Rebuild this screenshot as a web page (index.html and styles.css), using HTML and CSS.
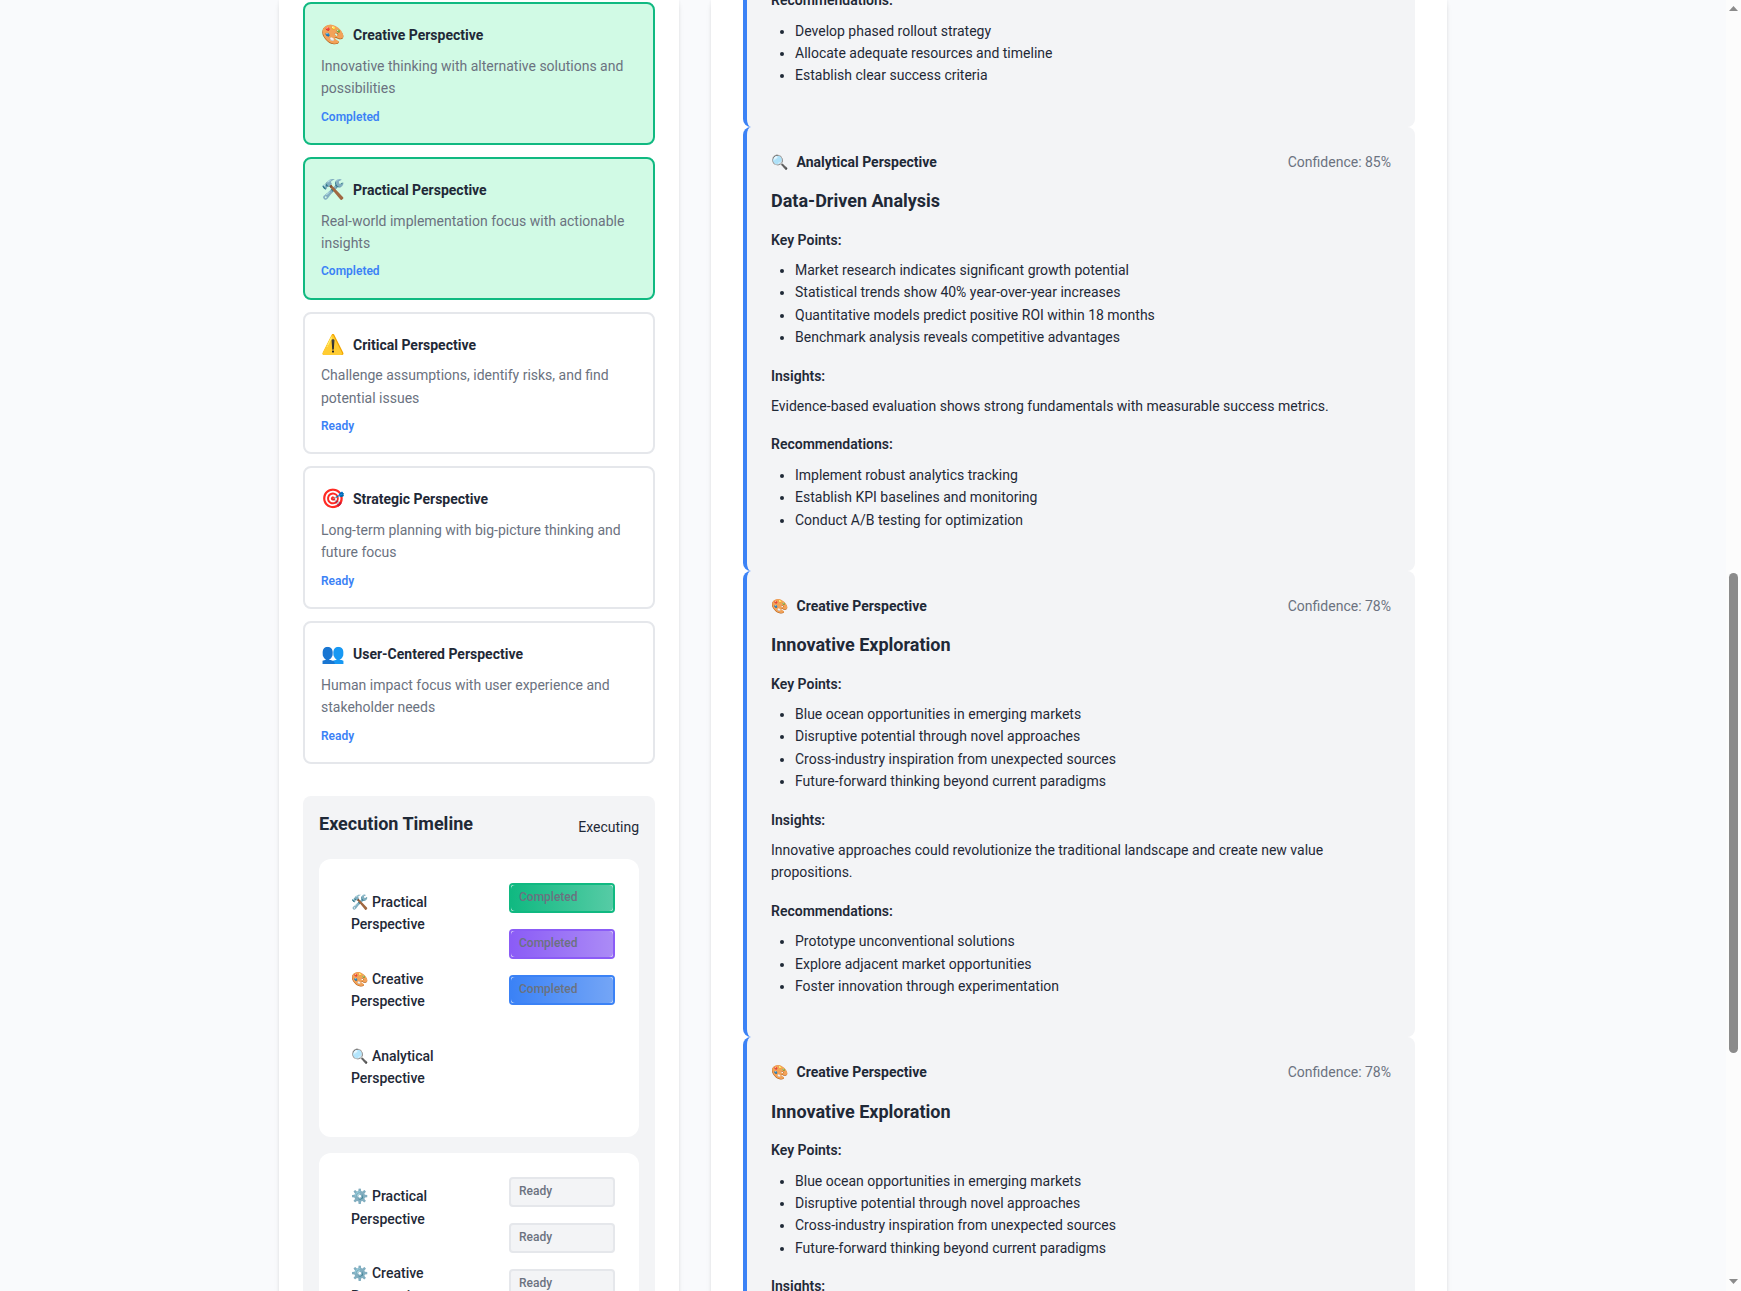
FILE: index.html
```html
<!DOCTYPE html>
<html lang="en">
<head>
<meta charset="utf-8">
<title>Perspectives</title>
<link rel="stylesheet" href="styles.css">
</head>
<body>
<div class="viewport">
<main class="page">
  <aside class="panel sidebar">
    <section class="cards">
      <article class="card done">
        <div class="card-head"><span class="card-icon">🎨</span><span class="name">Creative Perspective</span></div>
        <p class="desc">Innovative thinking with alternative solutions and possibilities</p>
        <div class="status">Completed</div>
      </article>
      <article class="card done">
        <div class="card-head"><span class="card-icon">🛠️</span><span class="name">Practical Perspective</span></div>
        <p class="desc">Real-world implementation focus with actionable insights</p>
        <div class="status">Completed</div>
      </article>
      <article class="card">
        <div class="card-head"><span class="card-icon">⚠️</span><span class="name">Critical Perspective</span></div>
        <p class="desc">Challenge assumptions, identify risks, and find potential issues</p>
        <div class="status">Ready</div>
      </article>
      <article class="card">
        <div class="card-head"><span class="card-icon">🎯</span><span class="name">Strategic Perspective</span></div>
        <p class="desc">Long-term planning with big-picture thinking and future focus</p>
        <div class="status">Ready</div>
      </article>
      <article class="card">
        <div class="card-head"><span class="card-icon">👥</span><span class="name">User-Centered Perspective</span></div>
        <p class="desc">Human impact focus with user experience and stakeholder needs</p>
        <div class="status">Ready</div>
      </article>
    </section>
    <section class="timeline">
      <header class="timeline-head"><h3>Execution Timeline</h3><span>Executing</span></header>
      <div class="track">
        <div class="labels">
          <div class="label">🛠️ Practical Perspective</div>
          <div class="label">🎨 Creative Perspective</div>
          <div class="label">🔍 Analytical Perspective</div>
        </div>
        <div class="bars">
          <div class="bar green"><span>Completed</span></div>
          <div class="bar purple"><span>Completed</span></div>
          <div class="bar blue"><span>Completed</span></div>
        </div>
      </div>
      <div class="track">
        <div class="labels">
          <div class="label">⚙️ Practical Perspective</div>
          <div class="label">⚙️ Creative Perspective</div>
          <div class="label">⚙️ Analytical Perspective</div>
        </div>
        <div class="bars">
          <div class="bar"><span>Ready</span></div>
          <div class="bar"><span>Ready</span></div>
          <div class="bar"><span>Ready</span></div>
        </div>
      </div>
    </section>
  </aside>
  <section class="panel results">
    <article class="result continued">
      <h4>Recommendations:</h4>
      <ul>
        <li>Develop phased rollout strategy</li>
        <li>Allocate adequate resources and timeline</li>
        <li>Establish clear success criteria</li>
      </ul>
    </article>
    <article class="result">
      <header class="result-head"><span class="who"><span>🔍</span><span class="name">Analytical Perspective</span></span><span class="confidence">Confidence: 85%</span></header>
      <h3>Data-Driven Analysis</h3>
      <h4>Key Points:</h4>
      <ul>
        <li>Market research indicates significant growth potential</li>
        <li>Statistical trends show 40% year-over-year increases</li>
        <li>Quantitative models predict positive ROI within 18 months</li>
        <li>Benchmark analysis reveals competitive advantages</li>
      </ul>
      <h4>Insights:</h4>
      <p>Evidence-based evaluation shows strong fundamentals with measurable success metrics.</p>
      <h4>Recommendations:</h4>
      <ul>
        <li>Implement robust analytics tracking</li>
        <li>Establish KPI baselines and monitoring</li>
        <li>Conduct A/B testing for optimization</li>
      </ul>
    </article>
    <article class="result">
      <header class="result-head"><span class="who"><span>🎨</span><span class="name">Creative Perspective</span></span><span class="confidence">Confidence: 78%</span></header>
      <h3>Innovative Exploration</h3>
      <h4>Key Points:</h4>
      <ul>
        <li>Blue ocean opportunities in emerging markets</li>
        <li>Disruptive potential through novel approaches</li>
        <li>Cross-industry inspiration from unexpected sources</li>
        <li>Future-forward thinking beyond current paradigms</li>
      </ul>
      <h4>Insights:</h4>
      <p>Innovative approaches could revolutionize the traditional landscape and create new value propositions.</p>
      <h4>Recommendations:</h4>
      <ul>
        <li>Prototype unconventional solutions</li>
        <li>Explore adjacent market opportunities</li>
        <li>Foster innovation through experimentation</li>
      </ul>
    </article>
    <article class="result">
      <header class="result-head"><span class="who"><span>🎨</span><span class="name">Creative Perspective</span></span><span class="confidence">Confidence: 78%</span></header>
      <h3>Innovative Exploration</h3>
      <h4>Key Points:</h4>
      <ul>
        <li>Blue ocean opportunities in emerging markets</li>
        <li>Disruptive potential through novel approaches</li>
        <li>Cross-industry inspiration from unexpected sources</li>
        <li>Future-forward thinking beyond current paradigms</li>
      </ul>
      <h4>Insights:</h4>
    </article>
  </section>
</main>
<div class="scrollbar">
  <svg width="9" height="5" viewBox="0 0 9 5"><path d="M4.5 0L9 5H0Z"/></svg>
  <div class="thumb"></div>
  <svg class="down" width="9" height="5" viewBox="0 0 9 5"><path d="M0 0H9L4.5 5Z"/></svg>
</div>
</div>
</body>
</html>
```
FILE: styles.css
```css
* { box-sizing: border-box; margin: 0; padding: 0; }

body {
  background: #f9fafc;
  color: #1f2937;
  font-family: Roboto, "Liberation Sans", sans-serif;
  font-size: 14px;
  line-height: 1.6;
  overflow: hidden;
}

.viewport { display: flex; height: 1291px; overflow: hidden; }

.page {
  flex: 1;
  max-width: 1200px;
  margin: 0 auto;
  padding: 0 16px;
  display: grid;
  grid-template-columns: 400px 1fr;
  gap: 32px;
}

.panel { background: #fff; box-shadow: 0 4px 6px -1px rgba(0, 0, 0, .1), 0 0 3px rgba(0, 0, 0, .06); height: 1600px; }

.sidebar { padding: 2.25px 24px 0; }
.cards { display: flex; flex-direction: column; gap: 12px; }
.card { border: 2px solid #e5e7eb; border-radius: 8px; padding: 16px; }
.card.done { background: #d1fae5; border-color: #10b981; }
.card-head { display: flex; align-items: center; gap: 8px; margin-bottom: 4px; }
.card-icon { font-size: 19.2px; }
.name { font-weight: 700; }
.desc { color: #6b7280; margin-bottom: 8px; }
.status { color: #3b82f6; font-size: 12px; font-weight: 600; }

h3 { font-size: 18px; font-weight: 700; line-height: 1.3; }
h4 { font-size: 14px; font-weight: 600; margin-bottom: 8px; }

.timeline { margin-top: 32px; padding: 16px; background: #f3f4f6; border-radius: 8px; height: 800px; }
.timeline-head { display: flex; justify-content: space-between; align-items: center; margin-bottom: 16px; }
.timeline-head h3 { margin-bottom: 8px; }
.track { display: grid; grid-template-columns: 150px 1fr; gap: 16px; padding: 24px; margin-bottom: 16px; background: #fff; border-radius: 12px; }
.label { padding: 8px; margin-bottom: 16px; font-weight: 500; word-spacing: .5px; }
.bars { display: flex; flex-direction: column; gap: 16px; }
.bar { height: 30px; border: 2px solid #e5e7eb; border-radius: 4px; background: #f3f4f6; color: #6b7280; font-size: 12px; font-weight: 500; }
.bar span { display: block; height: 26px; padding: 3px 8px; border-radius: 4px; }
.green { border-color: #10b981; }
.green span { background: linear-gradient(90deg, #10b981, #10b981b0); }
.purple { border-color: #8b5cf6; }
.purple span { background: linear-gradient(90deg, #8b5cf6, #8b5cf6b0); }
.blue { border-color: #3b82f6; }
.blue span { background: linear-gradient(90deg, #3b82f6, #3b82f6b0); }

.results { padding: 0 32px; }
.result { background: #f3f4f6; border-left: 4px solid #3b82f6; border-radius: 8px; padding: 24px; }
.result.continued { margin-top: -10.75px; padding-top: 0; }
.result-head { display: flex; justify-content: space-between; margin-bottom: 16px; }
.who { display: flex; gap: 8.5px; }
.confidence { color: #6b7280; }
.result h3, .result ul, .result p { margin-bottom: 16px; }
.result ul { padding-left: 24px; }

.scrollbar {
  width: 15px;
  padding: 6px 3px 7px;
  background: #fcfcfc;
  display: flex;
  flex-direction: column;
  align-items: center;
}
.scrollbar svg { fill: #8b8b8b; flex: none; }
.thumb { width: 9px; height: 480px; margin-top: 562px; border-radius: 5px; background: #8b8b8b; }
.down { margin-top: auto; }
```
